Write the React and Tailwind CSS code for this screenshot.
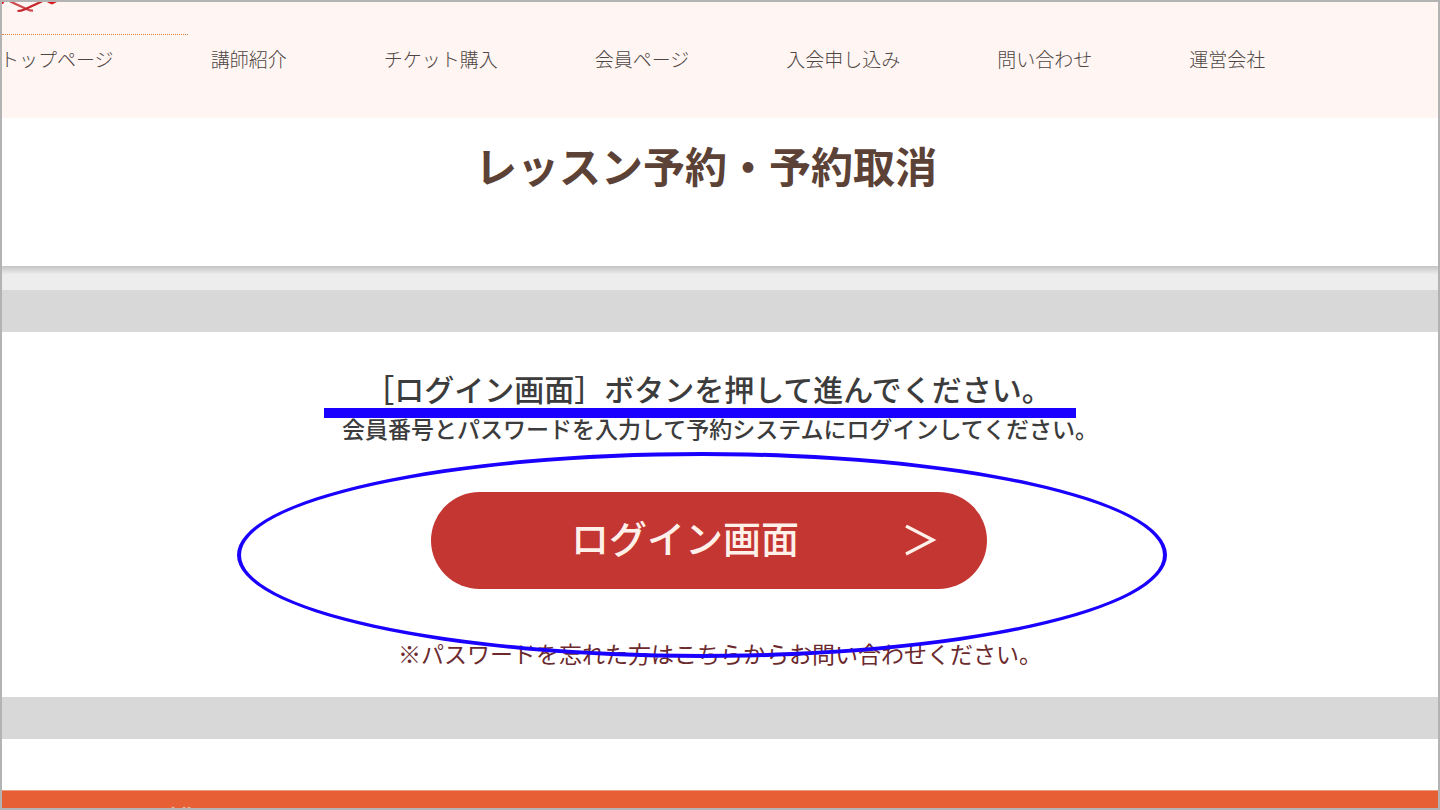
const NAV_ITEMS = [
  "トップページ",
  "講師紹介",
  "チケット購入",
  "会員ページ",
  "入会申し込み",
  "問い合わせ",
  "運営会社",
];

function Logo() {
  return (
    <svg className="block h-8 w-[186px]" viewBox="0 0 186 32" fill="none" aria-hidden="true">
      <path d="M8 -0.500 C14 2 20 5 25 7.200 Q28 8.600 31 8.600" stroke="#cf4a50" strokeWidth="2.200" />
      <path d="M40 -0.500 C34 2 28 5 23 7.200 Q19 9 15.500 9" stroke="#c6262b" strokeWidth="2.200" />
      <path d="M-1 -1 H3 L1 2 H-1 Z" fill="#d8161b" />
      <path d="M44 -1 H56 L54 0.500 L50 2.500 L46 0.800 Z" fill="#d8161b" />
    </svg>
  );
}

function Header() {
  return (
    <header className="bg-[#fff5f2] pb-[42px]">
      <div className="w-fit border-b border-dotted border-[#e0803a]">
        <Logo />
      </div>
      <nav aria-label="メイン" className="-ml-0.5 pt-2">
        <ul className="flex gap-[97px] whitespace-nowrap pb-px text-[19px] leading-8 font-light text-[#4d4644]">
          {NAV_ITEMS.map((item) => (
            <li key={item}>
              <a href="#">{item}</a>
            </li>
          ))}
        </ul>
      </nav>
    </header>
  );
}

function LoginPanel() {
  return (
    <section className="relative bg-white pt-[33px] pb-7 text-center text-[#3c3c3c]">
      <h2 className="pr-6 text-[30px] leading-[47px] font-medium">
        ［ログイン画面］ボタンを押して進んでください。
      </h2>
      <p className="text-[23px] leading-8 font-medium">
        会員番号とパスワードを入力して予約システムにログインしてください。
      </p>
      <div className="flex justify-center pt-12 pr-[22px]">
        <button
          type="button"
          className="grid w-[556px] grid-cols-[1fr_auto_1fr] items-center rounded-full bg-[#c43632] pt-4 pb-6 text-[38px] leading-[57px] font-medium text-[#fff0ea]"
        >
          <span className="col-start-2 pr-12">ログイン画面</span>
          <svg
            className="mt-2 ml-2 h-8 w-8 justify-self-center"
            viewBox="0 0 32 32"
            fill="none"
            stroke="currentColor"
            strokeWidth="3.200"
            aria-hidden="true"
          >
            <path d="M1 1 L28 15 L1 29" />
          </svg>
        </button>
      </div>
      <p className="pt-12 text-[23px] leading-8 text-[#6b2a2e]">
        <a href="#">※パスワードを忘れた方はこちらからお問い合わせください。</a>
      </p>

      <div className="pointer-events-none absolute top-[76px] left-1/2 -ml-[396px] h-[10px] w-[752px] bg-[#1a00ff]" />
      <div className="pointer-events-none absolute top-[120px] left-1/2 -ml-[483px] h-[206px] w-[930px] rounded-[50%] border-4 border-[#1a00ff]" />
    </section>
  );
}

export default function App() {
  return (
    <div className="flex min-h-screen flex-col overflow-hidden border-2 border-[#b3b3b3] bg-white font-['Noto_Sans_CJK_JP',sans-serif]">
      <Header />
      <main>
        <div className="bg-white pt-[15px] pr-7 pb-[69px] text-center">
          <h1 className="text-[42px] leading-[64px] font-bold text-[#5c4236]">
            レッスン予約・予約取消
          </h1>
        </div>
        <div className="h-6 bg-linear-to-b from-[#c4c4c4] to-[#ededed] to-35%" />
        <div className="border-y-[42px] border-[#d8d8d8]">
          <LoginPanel />
        </div>
      </main>
      <footer className="mt-[51px] flex grow items-end border-t border-[#ee9a80] bg-[#e65f35] pl-[168px]">
        <svg className="block h-[2px] w-6" viewBox="0 0 24 2" fill="#f3b79d" aria-hidden="true">
          <path d="M1 2 L3 0.500 L5 2 Z M12 2 L14 0.500 L16 2 Z M17 2 L19 0.500 L21 2 Z" />
        </svg>
      </footer>
    </div>
  );
}
